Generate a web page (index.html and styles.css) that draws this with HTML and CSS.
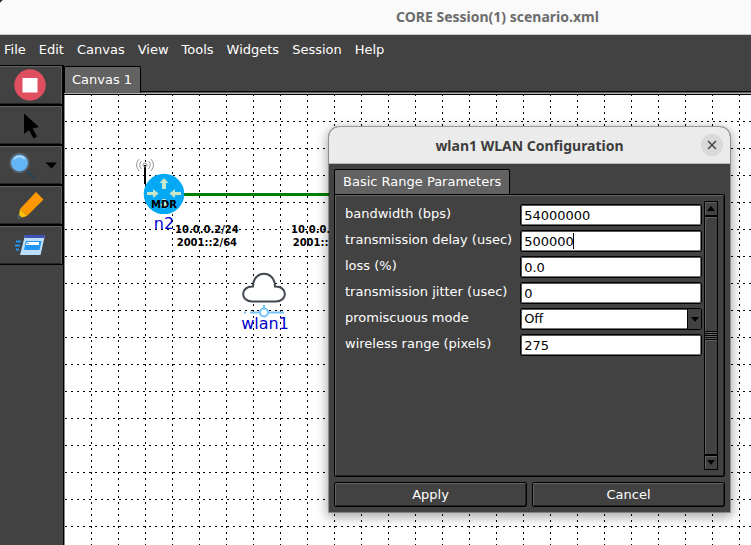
FILE: index.html
```html
<!DOCTYPE html>
<html lang="en">
<head>
<meta charset="utf-8">
<title>CORE Session(1) scenario.xml</title>
<link rel="stylesheet" href="styles.css">
</head>
<body>
<div class="app">
  <header class="titlebar">
    <svg class="corner" width="4" height="4" viewBox="0 0 4 4" aria-hidden="true"><path d="M0 0H3Q1 1 0 3Z" fill="#222"/></svg>
    <h1>CORE Session(1) scenario.xml</h1>
  </header>
  <nav class="menubar">
    <button>File</button><button>Edit</button><button>Canvas</button><button>View</button><button>Tools</button><button>Widgets</button><button>Session</button><button>Help</button>
  </nav>
  <div class="workspace">
    <aside class="toolbar">
      <button class="tool" aria-label="Stop session">
        <svg width="60" height="36" viewBox="0 0 60 36"><circle cx="30" cy="18" r="15.7" fill="#e04f5f"/><rect x="22.5" y="11" width="15" height="14.500" fill="#fff"/></svg>
      </button>
      <button class="tool" aria-label="Select">
        <svg width="60" height="36" viewBox="0 0 60 36"><path d="M24 6.500V27L29 23L33.500 31.500L37 29.500L32.500 21.500L39 20Z" fill="#000"/></svg>
      </button>
      <button class="tool" aria-label="Observe">
        <svg width="60" height="36" viewBox="0 0 60 36"><path d="M27 24L35 32" stroke="#2b4455" stroke-width="2.500"/><circle cx="19.500" cy="16" r="9.500" fill="#64b5f6" stroke="#555b60" stroke-width="2"/><path d="M14 12Q19.500 6.500 25 12" fill="none" stroke="#bbdefb" stroke-width="1.500"/><path d="M45.500 15.500H57L51.500 21.500Z" fill="#000"/></svg>
      </button>
      <button class="tool" aria-label="Marker">
        <svg width="60" height="36" viewBox="0 0 60 36"><path d="M36 5L43.500 12.500L27 29L20 22Z" fill="#ff9800"/><path d="M20 22L27 29L18.500 31.500Z" fill="#ffc107"/><path d="M18 27L22 30.500L17 32Z" fill="#455a64"/></svg>
      </button>
      <button class="tool" aria-label="Run tool">
        <svg width="60" height="36" viewBox="0 0 60 36"><path d="M25 8H45L40.500 28H20Z" fill="#bbdefb"/><path d="M25 8H45L44.300 11H24.200Z" fill="#3f51b5"/><path d="M26 14H41.500L39.500 23H24Z" fill="#2196f3"/><path d="M27 15H39V18H26Z" fill="#fff"/><path d="M27 16.500H29" stroke="#90a4ae"/><path d="M16 14.500H21M15 18.500H20M16 22.500H19" stroke="#2196f3" stroke-width="2"/></svg>
      </button>
    </aside>
    <main class="editor">
      <div class="tabs"><button class="tab">Canvas 1</button></div>
      <div class="canvas">
        <svg class="grid" aria-hidden="true">
          <defs>
            <pattern id="cols" width="27" height="6" patternUnits="userSpaceOnUse"><rect x="26" y="5" width="1" height="1"/><rect x="26" width="1" height="1"/></pattern>
            <pattern id="rows" width="6" height="27" patternUnits="userSpaceOnUse"><rect y="26" width="2" height="1"/></pattern>
          </defs>
          <rect width="100%" height="100%" fill="url(#cols)"/>
          <rect width="100%" height="100%" fill="url(#rows)"/>
          <path d="M118 99.500H300" stroke="#008000" stroke-width="3"/>
        </svg>
        <div class="node router">
          <svg width="52" height="60" viewBox="0 0 52 60">
            <path d="M10 11V30" stroke="#000" stroke-width="2"/>
            <g fill="none" stroke="#999"><circle cx="10" cy="11" r="2"/><path d="M6.500 7Q3 11 6.500 15M13.500 7Q17 11 13.500 15M4 5Q-1 11 4 17M16 5Q21 11 16 17"/></g>
            <circle cx="29" cy="40" r="20.300" fill="#03a9f4"/>
            <path d="M29 24L33.500 29H31V35H27V29H24.500ZM12 38H18V35L23.500 39.500L18 44V41H12ZM46 38H40V35L34.500 39.500L40 44V41H46ZM27 45H31V50H33L29 55L25 50H27Z" fill="#c8e6c9"/>
          </svg>
          <span class="badge">MDR</span>
          <span class="name">n2</span>
        </div>
        <div class="address first">10.0.0.2/24<br>2001::2/64</div>
        <div class="address second">10.0.0.<br>2001::</div>
        <div class="node wlan">
          <svg width="48" height="48" viewBox="0 0 48 48">
            <path d="M11 31.500C-1 31.500-1 16 12 16.500C12 -.500 34 -.500 34 16.500C47 16 47 31.500 35 31.500Z" fill="#fff" stroke="#424953" stroke-width="2"/>
            <path d="M23 35V38M3 42.500H5M9 42.500H43" stroke="#74c4fc" stroke-width="2"/><circle cx="23" cy="42.500" r="4" fill="#fff" stroke="#74c4fc" stroke-width="2"/>
          </svg>
          <span class="name">wlan1</span>
        </div>
      </div>
    </main>
  </div>
</div>

<section class="dialog" role="dialog" aria-labelledby="dialog-title">
  <header class="dialog-title">
    <h2 id="dialog-title">wlan1 WLAN Configuration</h2>
    <button class="close" aria-label="Close"><svg width="10" height="10" viewBox="0 0 10 10"><path d="M1 1L9 9M9 1L1 9" stroke="#444" stroke-width="1.500"/></svg></button>
  </header>
  <form class="dialog-body">
    <div class="tabs"><button type="button" class="tab">Basic Range Parameters</button></div>
    <div class="panel">
      <div class="fields">
        <label for="bandwidth">bandwidth (bps)</label><div class="field"><input id="bandwidth" value="54000000"></div>
        <label for="delay">transmission delay (usec)</label><div class="field"><input id="delay" value="500000"><span class="caret"></span></div>
        <label for="loss">loss (%)</label><div class="field"><input id="loss" value="0.0"></div>
        <label for="jitter">transmission jitter (usec)</label><div class="field"><input id="jitter" value="0"></div>
        <label for="mode">promiscuous mode</label><div class="field"><select id="mode"><option>Off</option><option>On</option></select><span class="drop"><svg width="8" height="5" viewBox="0 0 8 5"><path d="M0 0H8L4 5Z"/></svg></span></div>
        <label for="range">wireless range (pixels)</label><div class="field"><input id="range" value="275"></div>
      </div>
      <div class="scrollbar">
        <button type="button" aria-label="Scroll up"><svg width="8" height="5" viewBox="0 0 8 5"><path d="M0 5H8L4 0Z"/></svg></button>
        <div class="thumb"><span class="grip"></span></div>
        <button type="button" aria-label="Scroll down"><svg width="8" height="5" viewBox="0 0 8 5"><path d="M0 0H8L4 5Z"/></svg></button>
      </div>
    </div>
    <div class="actions"><button type="button">Apply</button><button type="button">Cancel</button></div>
  </form>
</section>
</body>
</html>
```

FILE: styles.css
```css
* { box-sizing: border-box; }
body {
  margin: 0;
  overflow: hidden;
  background: #424242;
  color: #fff;
  font: 13px/16px "DejaVu Sans", sans-serif;
}
button, input, select { font: inherit; color: inherit; margin: 0; }
button { background: none; border: 0; padding: 0; }
h1, h2 { margin: 0; font: bold 14px/20px "Noto Sans", sans-serif; }
svg { display: block; }

.app { display: flex; flex-direction: column; height: 100vh; }
.titlebar {
  position: relative;
  height: 35px;
  padding: 7px 0 0 396px;
  background: #fafafa;
  border-bottom: 1px solid #c8c8c8;
  color: #6c6c6c;
}
.titlebar h1 { white-space: nowrap; }
.corner { position: absolute; left: 0; top: 0; }
.menubar { display: flex; gap: 13px; height: 30px; padding: 0 4px 1px; }

.workspace { display: flex; flex: 1; min-height: 0; }
.toolbar { width: 64px; border-right: 1px solid #000; }
.tool {
  display: block;
  width: 63px;
  height: 40px;
  border: solid #000;
  border-width: 1px 1px 1px 0;
  box-shadow: inset 0 1px #626262, inset -1px 0 #626262, inset 0 -1px #222;
  padding-bottom: 1px;
}
.editor { display: flex; flex-direction: column; flex: 1; min-width: 0; }
.tabs { display: flex; position: relative; }
.tab {
  height: 26px;
  padding: 0 8px;
  background: #626262;
  border: 1px solid #000;
  border-bottom: 0;
  border-radius: 2px 2px 0 0;
}
.editor > .tabs {
  padding-top: 1px;
  height: 30px;
  background: linear-gradient(#000, #000) 0 26px / 100% 1px no-repeat,
              linear-gradient(#b0b0b0, #b0b0b0) 0 28px / 100% 1px no-repeat,
              linear-gradient(#626262, #626262) 0 27px / 100% 1px no-repeat;
  border-bottom: 1px solid #000;
}
.editor .tab { height: 27px; padding: 0 8px 0 7px; }
.canvas {
  position: relative;
  flex: 1;
  overflow: hidden;
  background: #fff;
  border-left: 1px solid #8a8a8a;
}
.grid { position: absolute; inset: 0; width: 100%; height: 100%; }
.node { position: absolute; }
.name { display: block; color: #0000cd; font-size: 16px; line-height: 20px; text-align: center; }
.router { left: 70px; top: 59px; }
.router .name { width: 58px; }
.badge {
  position: absolute;
  left: 16px;
  top: 45px;
  color: #000;
  font: bold 10px/12px "DejaVu Sans", sans-serif;
}
.wlan { left: 176px; top: 175px; }
.wlan .name { margin-top: -4px; }
.address {
  position: absolute;
  top: 128px;
  color: #000;
  font: bold 10px/13px "DejaVu Sans", sans-serif;
  text-align: center;
}
.first { left: 110px; }
.second { left: 226px; }

.dialog {
  position: absolute;
  left: 329px;
  top: 127px;
  width: 401px;
  background: #424242;
  border-radius: 10px 10px 0 0;
  box-shadow: 0 0 0 1px rgba(0, 0, 0, .3), 0 3px 12px 2px rgba(0, 0, 0, .35);
}
.dialog-title {
  position: relative;
  display: flex;
  justify-content: center;
  align-items: center;
  height: 37px;
  padding-top: 1px;
  background: #ebebeb;
  border-bottom: 1px solid #b8b8b8;
  border-radius: 10px 10px 0 0;
  color: #3d3d3d;
}
.close {
  position: absolute;
  right: 7px;
  top: 7px;
  display: grid;
  place-items: center;
  width: 22px;
  height: 22px;
  border-radius: 50%;
  background: #d9d9d9;
}
.dialog-body { padding: 5px; }
.dialog .tab { height: 25px; padding: 0 8px; }
.panel {
  display: flex;
  gap: 2px;
  padding: 6px 6px 6px 9px;
  border: 1px solid #000;
  border-radius: 0 2px 2px 2px;
  box-shadow: inset 1px 1px #626262, inset -1px -1px #222;
}
.fields {
  flex: 1;
  display: grid;
  grid-template-columns: max-content 1fr;
  grid-auto-rows: 22px;
  align-content: start;
  gap: 4px 8px;
  padding-top: 3px;
}
.fields label { padding: 2px 0 0 1px; }
.field { position: relative; }
.field input, .field select {
  display: block;
  width: 100%;
  height: 22px;
  padding: 0 3px;
  appearance: none;
  background: #fff;
  color: #000;
  border: 1px solid #000;
  border-radius: 2px;
  box-shadow: inset 1px 1px #555, inset -1px -1px #777;
}
.caret { position: absolute; left: 53px; top: 3px; width: 1px; height: 16px; background: #000; }
.drop {
  position: absolute;
  right: 1px;
  top: 1px;
  display: grid;
  place-items: center;
  width: 14px;
  height: 20px;
  background: #424242;
  border-left: 1px solid #000;
  pointer-events: none;
}
.scrollbar { display: flex; flex-direction: column; width: 14px; height: 269px; border: 1px solid #000; }
.scrollbar button { display: grid; place-items: center; height: 13px; box-shadow: inset 1px 1px #626262; }
.thumb {
  display: grid;
  place-items: center;
  flex: 1;
  border: solid #000;
  border-width: 2px 0;
  box-shadow: inset 1px 1px #626262;
}
.grip { width: 12px; height: 10px; background: repeating-linear-gradient(#000 0 1px, #626262 1px 2px); }
.actions { display: grid; grid-template-columns: 1fr 1fr; gap: 5px; margin-top: 5px; }
.actions button {
  height: 25px;
  border: 1px solid #000;
  border-radius: 2px;
  box-shadow: inset 1px 1px #626262, inset -1px -1px #222;
}
```
